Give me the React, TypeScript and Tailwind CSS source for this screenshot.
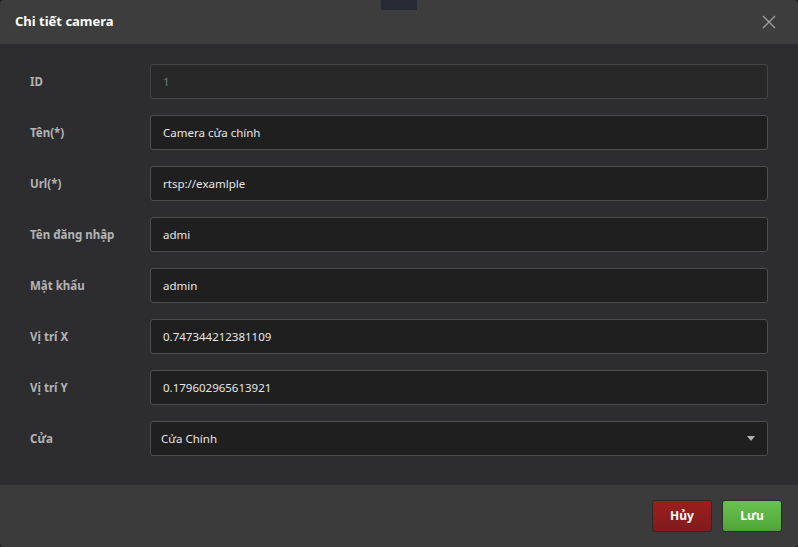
import React from "react";

const font = { fontFamily: '"Noto Sans", "Open Sans", sans-serif' };

type Field = { label: string; value: string; disabled?: boolean };

const fields: Field[] = [
  { label: "ID", value: "1", disabled: true },
  { label: "Tên(*)", value: "Camera cửa chính" },
  { label: "Url(*)", value: "rtsp://examlple" },
  { label: "Tên đăng nhập", value: "admi" },
  { label: "Mật khẩu", value: "admin" },
  { label: "Vị trí X", value: "0.747344212381109" },
  { label: "Vị trí Y", value: "0.179602965613921" },
];

function Row({ label, children }: { label: string; children: React.ReactNode }) {
  return (
    <div className="flex items-center h-[35px]">
      <div className="w-[120px] shrink-0 text-[11.5px] font-bold text-[#b4b4b4]">{label}</div>
      <div className="flex-1 h-full">{children}</div>
    </div>
  );
}

export default function App() {
  return (
    <div className="w-[798px] h-[547px] bg-[#1a1a1a] relative overflow-hidden" style={font}>
      <div className="w-full h-full flex flex-col rounded-[4px] overflow-hidden">
        {/* header */}
        <div className="h-[44px] bg-[#3d3d3d] flex items-center justify-between pl-[15px] pr-[22px] shrink-0">
          <span className="text-[13px] font-bold text-white">Chi tiết camera</span>
          <svg width="14" height="14" viewBox="0 0 14 14" className="text-[#a0a0a0]">
            <path d="M1 1 L13 13 M13 1 L1 13" stroke="currentColor" strokeWidth="1.3" fill="none" />
          </svg>
        </div>

        {/* body */}
        <div className="flex-1 bg-[#2d2d30] pt-[20px] px-[30px] flex flex-col gap-[16px]">
          {fields.map((f) => (
            <Row key={f.label} label={f.label}>
              <div
                className={
                  f.disabled
                    ? "h-full rounded-[3px] border border-[#444446] bg-[#282828] flex items-center pl-[12px] text-[11.5px] text-[#7a7a7a]"
                    : "h-full rounded-[3px] border border-[#4e4e50] bg-[#1f1f1f] flex items-center pl-[12px] text-[11.5px] text-[#e6e6e6]"
                }
              >
                {f.value}
              </div>
            </Row>
          ))}
          <Row label="Cửa">
            <div className="h-full rounded-[3px] border border-[#4e4e50] bg-[#1f1f1f] flex items-center justify-between pl-[10px] pr-[12px] text-[11.5px] text-[#e6e6e6]">
              <span>Cửa Chính</span>
              <svg width="8" height="5" viewBox="0 0 8 5">
                <path d="M0 0 H8 L4 5 Z" fill="#b0b0b0" />
              </svg>
            </div>
          </Row>
        </div>

        {/* footer */}
        <div className="h-[62px] bg-[#3b3b3b] shrink-0 flex items-center justify-end gap-[10px] pr-[16px] pb-[1px]">
          <button className="w-[60px] h-[32px] rounded-[3px] border border-[#2a2a2a] bg-gradient-to-b from-[#9e1d1d] to-[#7f1c1c] text-white text-[12px] font-bold">
            Hủy
          </button>
          <button className="w-[60px] h-[32px] rounded-[3px] border border-[#2a2a2a] bg-gradient-to-b from-[#6cc24f] to-[#4ea537] text-white text-[12px] font-bold">
            Lưu
          </button>
        </div>
      </div>

      {/* tab peeking over the top edge */}
      <div className="absolute left-[381px] top-0 w-[36px] h-[10px] bg-[#262a35]" />
    </div>
  );
}
